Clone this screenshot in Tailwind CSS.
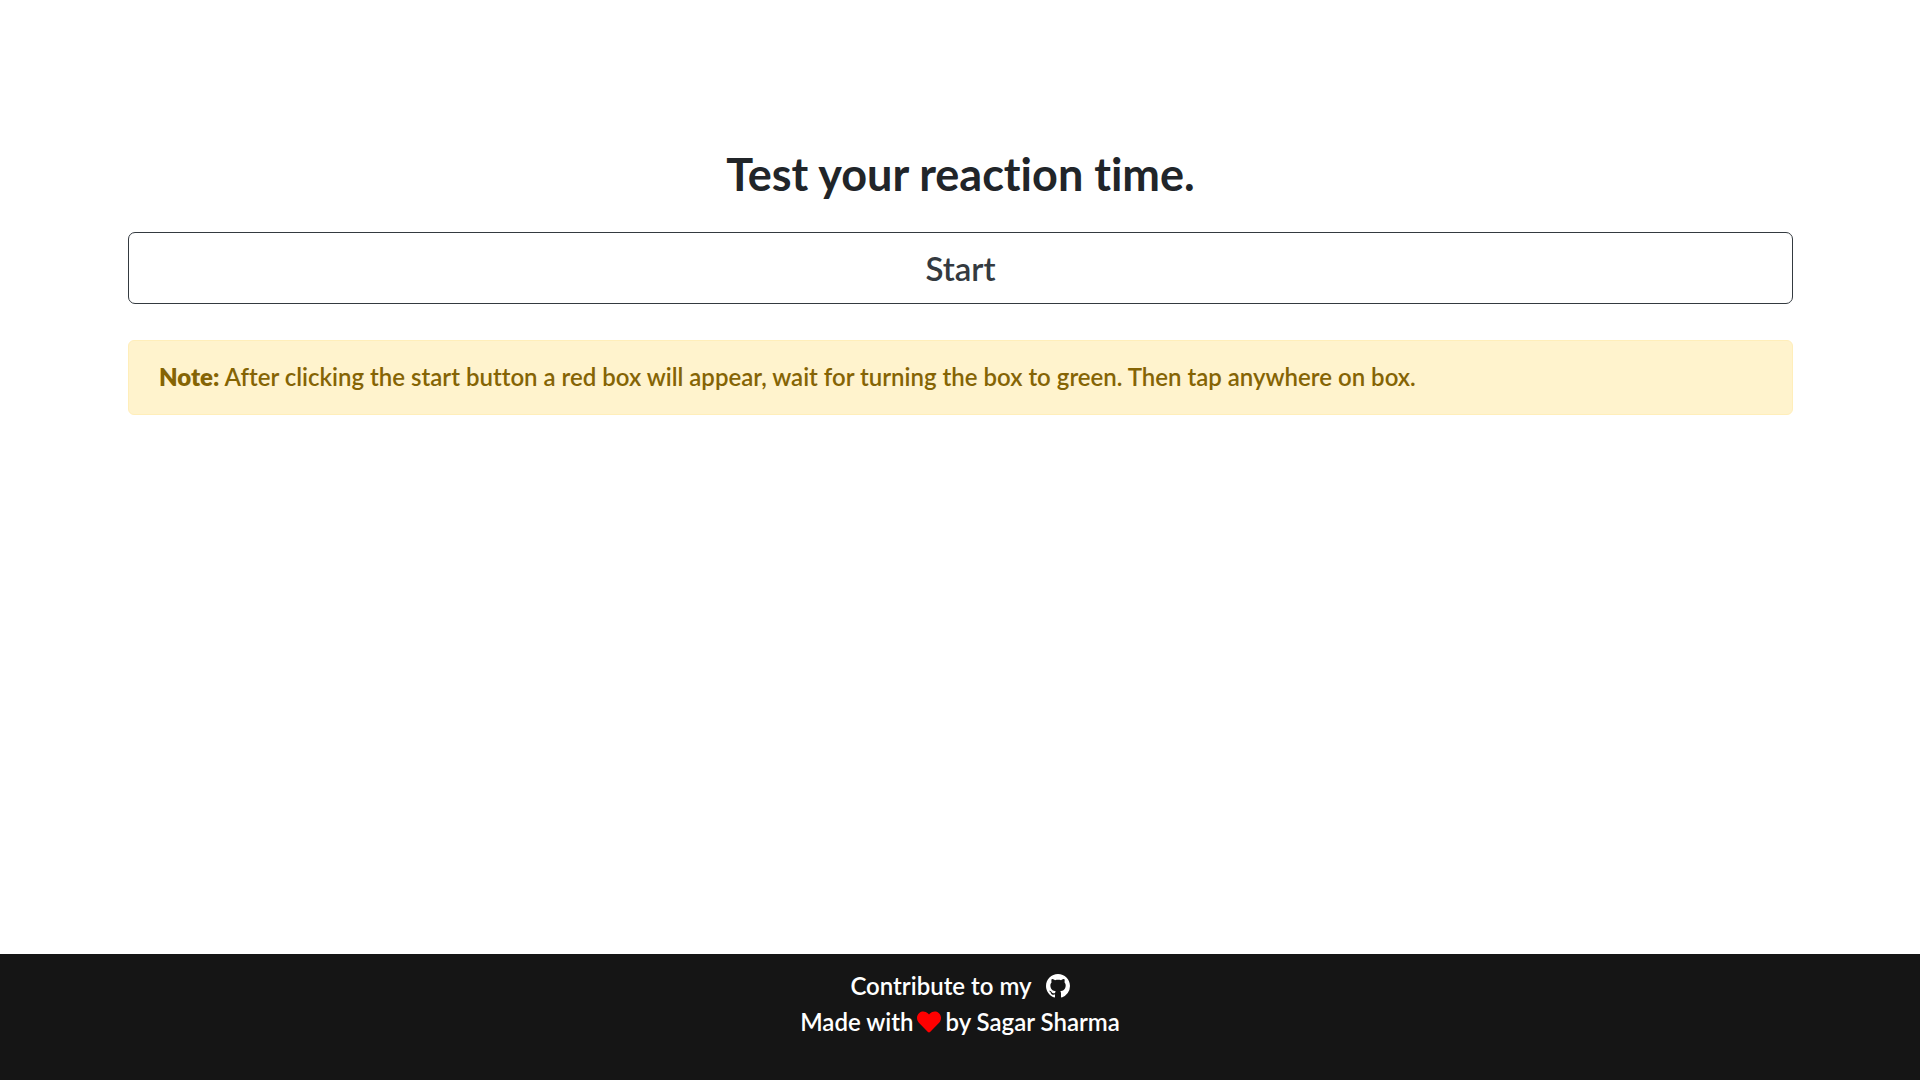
<!DOCTYPE html>
<html lang="en">
<head>
<meta charset="utf-8">
<meta name="viewport" content="width=device-width, initial-scale=1">
<title>Reaction Time Test</title>
<script src="https://cdn.jsdelivr.net/npm/@tailwindcss/browser@4"></script>
</head>
<body class="flex min-h-screen flex-col bg-white font-['Lato',sans-serif] text-2xl/9 font-semibold text-[#212529] [font-variant-ligatures:none]">
<main class="flex-1 px-4 pt-36 md:pr-[127px] md:pl-32">
  <h1 class="mb-7 text-center text-[45px]/[60px] font-bold">Test your reaction time.</h1>
  <button type="button" class="block h-18 w-full rounded-[7px] border border-[#343a40] text-center text-[33px]/[48px] text-[#343a40]">Start</button>
  <p class="mt-9 rounded-md border border-[#ffeeba] bg-[#fff3cd] px-[30px] pt-[18px] pb-[19px] text-[#856404]"><strong class="font-extrabold">Note:</strong> After clicking the start button a red box will appear, wait for turning the box to green. Then tap anywhere on box.</p>
</main>
<footer class="flex flex-col items-center bg-[#151515] pt-3.5 pb-10 text-white">
  <p class="flex items-center">Contribute to my
    <a href="#" aria-label="GitHub" class="ml-3.5"><svg class="size-6" viewBox="0 0 16 16" fill="currentColor" aria-hidden="true"><path d="M8 0C3.58 0 0 3.58 0 8c0 3.54 2.29 6.53 5.47 7.59.4.07.55-.17.55-.38 0-.19-.01-.82-.01-1.49-2.01.37-2.53-.49-2.69-.94-.09-.23-.48-.94-.82-1.13-.28-.15-.68-.52-.01-.53.63-.01 1.08.58 1.23.82.72 1.21 1.87.87 2.33.66.07-.52.28-.87.51-1.07-1.78-.2-3.64-.89-3.64-3.95 0-.87.31-1.59.82-2.15-.08-.2-.36-1.02.08-2.12 0 0 .67-.21 2.2.82.64-.18 1.32-.27 2-.27s1.36.09 2 .27c1.53-1.04 2.2-.82 2.2-.82.44 1.1.16 1.92.08 2.12.51.56.82 1.27.82 2.15 0 3.07-1.87 3.75-3.65 3.95.29.25.54.73.54 1.48 0 1.07-.01 1.93-.01 2.2 0 .21.15.46.55.38A8.01 8.01 0 0 0 16 8c0-4.42-3.58-8-8-8z"/></svg></a>
  </p>
  <p class="flex items-center">Made with
    <svg class="mx-1 size-6 text-[#ff0000]" viewBox="0 0 512 512" fill="currentColor" role="img" aria-label="love"><path d="M462.3 62.6C407.5 15.9 326 24.3 275.7 76.2L256 96.5l-19.7-20.3C186.1 24.3 104.5 15.9 49.7 62.6c-62.8 53.6-66.1 149.8-9.9 207.9l193.5 199.8c12.5 12.9 32.8 12.9 45.3 0l193.5-199.8c56.3-58.1 53-154.3-9.8-207.9z"/></svg>
    by Sagar Sharma</p>
</footer>
</body>
</html>
